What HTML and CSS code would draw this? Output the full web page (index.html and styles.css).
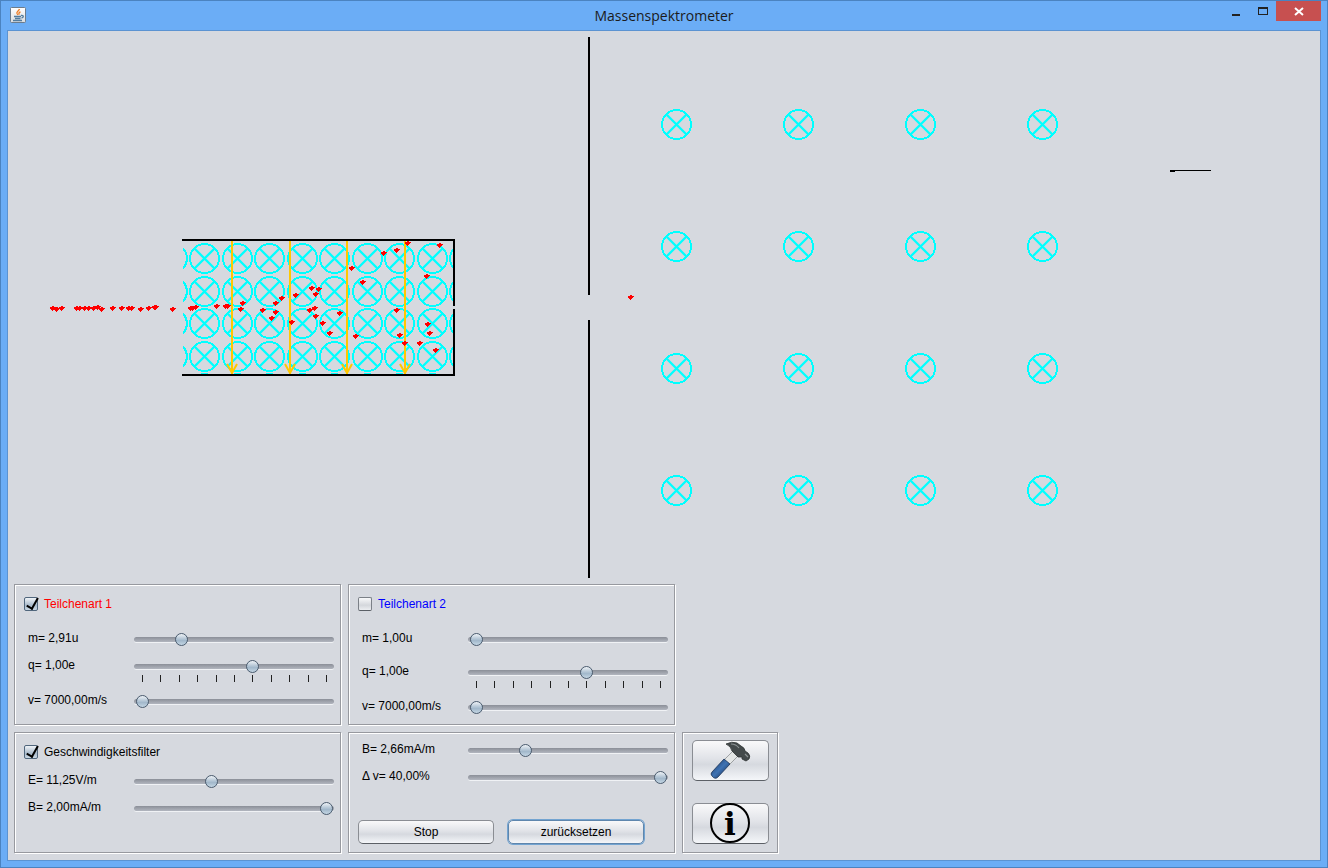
FILE: index.html
```
<!DOCTYPE html>
<html lang="de">
<head>
    <meta charset="UTF-8">
    <meta name="viewport" content="width=device-width, initial-scale=1.0">
    <title>Massenspektrometer</title>
    <link rel="stylesheet" href="styles.css">
</head>
<body>

<div class="window">
    <header class="titlebar">
        <svg class="app-icon" width="16" height="16" viewBox="0 0 16 16">
            <defs>
                <linearGradient id="iconBg" x1="0" y1="0" x2="0" y2="1">
                    <stop offset="0" stop-color="#fff"/>
                    <stop offset="1" stop-color="#d9dcdf"/>
                </linearGradient>
            </defs>
            <rect x="0.5" y="0.5" width="15" height="15" rx="1" fill="url(#iconBg)" stroke="#6c7c8c"/>
            <path d="M9.5 2C9 4 6 4.500 7 6.500L8 8M10.500 5C8.500 5.500 8.500 6.500 9.500 7.500" fill="none" stroke="#ee7d24" stroke-width="1.300"/>
            <path d="M4 9.500H11M5 11.500H10.500M3 13.500H12M11 8.500C14 8 14 10.500 11.500 11" fill="none" stroke="#537c9e" stroke-width="1.300"/>
        </svg>
        <h1>Massenspektrometer</h1>
        <div class="window-buttons">
            <button type="button" aria-label="Minimieren"><svg width="27" height="20"><rect x="10" y="13" width="8" height="2" fill="#222"/></svg></button>
            <button type="button" aria-label="Maximieren"><svg width="27" height="20"><path d="M9 6H19V14H9ZM10 8V13H18V8Z" fill="#222" fill-rule="evenodd"/></svg></button>
            <button type="button" class="close" aria-label="Schließen"><svg width="45" height="20"><path d="M19 7L27 14M27 7L19 14" stroke="#fff" stroke-width="2"/></svg></button>
        </div>
    </header>

    <main class="client">
        <svg class="simulation" id="simulation">
            <defs>
                <clipPath id="filterClip"><rect x="183" y="241" width="270" height="133"/></clipPath>
                <g id="fieldIn" class="field">
                    <circle r="14.500"/>
                    <path d="M-10 -10L10 10M-10 10L10 -10"/>
                </g>
                <g id="particle" class="particle">
                    <path d="M-1 -2H1V-1H3V0H2V1H1V2H0V3H-1V2H-2V1H-3V-1H-1Z"/>
                </g>
            </defs>
            <g transform="translate(-8,-31)">
                <g id="spectrometerField"></g>
                <g id="filterField" clip-path="url(#filterClip)"></g>
                <g id="electricField" class="electric"></g>
                <path class="wall" d="M182 240H454V306M454 309V375H182"/>
                <path class="wall" d="M589 37V295M589 320V578"/>
                <path class="detector" d="M1170 170H1211V171H1175V172H1170Z"/>
                <g id="particles"></g>
            </g>
        </svg>

        <div class="controls">
            <section class="panel">
                <label class="check red"><input type="checkbox" checked> Teilchenart 1</label>
                <div class="row">
                    <label for="m1">m= 2,91u</label>
                    <div class="slider"><input type="range" id="m1" min="1" max="10" step="0.01" value="2.91"></div>
                </div>
                <div class="row">
                    <label for="q1">q= 1,00e</label>
                    <div class="slider"><input type="range" id="q1" min="-5" max="5" value="1"></div>
                    <div class="ticks"><i></i><i></i><i></i><i></i><i></i><i></i><i></i><i></i><i></i><i></i><i></i></div>
                </div>
                <div class="row">
                    <label for="v1">v= 7000,00m/s</label>
                    <div class="slider"><input type="range" id="v1" min="7000" max="20000" value="7000"></div>
                </div>
            </section>

            <section class="panel">
                <label class="check blue"><input type="checkbox"> Teilchenart 2</label>
                <div class="row spaced">
                    <label for="m2">m= 1,00u</label>
                    <div class="slider"><input type="range" id="m2" min="1" max="10" step="0.01" value="1"></div>
                </div>
                <div class="row">
                    <label for="q2">q= 1,00e</label>
                    <div class="slider"><input type="range" id="q2" min="-5" max="5" value="1"></div>
                    <div class="ticks"><i></i><i></i><i></i><i></i><i></i><i></i><i></i><i></i><i></i><i></i><i></i></div>
                </div>
                <div class="row">
                    <label for="v2">v= 7000,00m/s</label>
                    <div class="slider"><input type="range" id="v2" min="7000" max="20000" value="7000"></div>
                </div>
            </section>

            <section class="panel filter">
                <label class="check"><input type="checkbox" checked> Geschwindigkeitsfilter</label>
                <div class="row">
                    <label for="e">E= 11,25V/m</label>
                    <div class="slider"><input type="range" id="e" min="0" max="30" step="0.01" value="11.25"></div>
                </div>
                <div class="row">
                    <label for="bf">B= 2,00mA/m</label>
                    <div class="slider"><input type="range" id="bf" min="0" max="2" step="0.01" value="2"></div>
                </div>
            </section>

            <section class="panel main-field">
                <div class="row">
                    <label for="b">B= 2,66mA/m</label>
                    <div class="slider"><input type="range" id="b" min="0" max="10" step="0.01" value="2.66"></div>
                </div>
                <div class="row">
                    <label for="dv">Δ v= 40,00%</label>
                    <div class="slider"><input type="range" id="dv" min="0" max="40" value="40"></div>
                </div>
                <div class="actions">
                    <button type="button" class="btn">Stop</button>
                    <button type="button" class="btn focused">zurücksetzen</button>
                </div>
            </section>

            <section class="panel tools">
                <button type="button" class="btn" aria-label="Einstellungen">
                    <svg width="40" height="38" viewBox="0 0 40 38">
                        <defs>
                            <linearGradient id="handle" x1="0" y1="0" x2="1" y2="1">
                                <stop offset="0.2" stop-color="#234a80"/>
                                <stop offset="0.5" stop-color="#3f73b3"/>
                                <stop offset="0.8" stop-color="#1d3f70"/>
                            </linearGradient>
                        </defs>
                        <path d="M22 9L27 14L18 23L13 18Z" fill="#e4e6e6" stroke="#8b8f90" stroke-width="0.800"/>
                        <path d="M13 17L19 22L7 35Q4 38 1 34Q-1 32 1 30Z" fill="url(#handle)" stroke="#1d3557" stroke-width="0.800"/>
                        <path d="M15 2Q21 -1 26 1L30 4Q34 6 34 9L37 11Q40 14 38 17L35 19L31 17V15L27 15L21 9Q20 4 15 2Z" fill="#444a4b" stroke="#2f3334" stroke-width="0.800"/>
                        <path d="M20 2Q25 2 28 6M34 12L37 15" fill="none" stroke="#8c9293" stroke-width="1.200"/>
                    </svg>
                </button>
                <button type="button" class="btn" aria-label="Info">
                    <svg width="40" height="40" viewBox="0 0 40 40">
                        <circle cx="19" cy="19" r="19" fill="none" stroke="#000" stroke-width="2"/>
                        <text class="info-letter" x="19" y="31" text-anchor="middle">i</text>
                    </svg>
                </button>
            </section>
        </div>
    </main>
</div>

<script>
    function add(parent, symbol, x, y) {
        const el = document.createElementNS("http://www.w3.org/2000/svg", "use");
        el.setAttribute("href", symbol);
        el.setAttribute("x", x);
        el.setAttribute("y", y);
        document.getElementById(parent).appendChild(el);
    }

    // Magnetfeld im Spektrometer
    for (let i = 0; i < 4; i++) {
        for (let j = 0; j < 4; j++) {
            add("spectrometerField", "#fieldIn", 676.5 + i * 122, 124.5 + j * 122);
        }
    }

    // Magnetfeld im Geschwindigkeitsfilter
    for (let i = 0; i < 10; i++) {
        for (let j = 0; j < 6; j++) {
            add("filterField", "#fieldIn", Math.floor(172 + i * 32.5) + 0.5, Math.floor(225.9 + j * 32.6) + 0.5);
        }
    }

    // E-Feld
    for (const x of [232, 290, 347, 405]) {
        const arrow = document.createElementNS("http://www.w3.org/2000/svg", "path");
        arrow.setAttribute("d", `M${x} 241V374M${x - 5} 364L${x} 373L${x + 5} 364`);
        document.getElementById("electricField").appendChild(arrow);
    }

    const particles = [
        [53, 308], [57, 309], [62, 308], [77, 308], [80, 308], [85, 308], [89, 308], [94, 308], [98, 307],
        [102, 309], [113, 308], [122, 308], [129, 308], [132, 308], [141, 309], [149, 308], [155, 307],
        [156, 307], [173, 309], [191, 308], [193, 308], [196, 307], [217, 306], [226, 306], [228, 306],
        [243, 303], [241, 309], [263, 310], [276, 303], [282, 298], [276, 312], [272, 318], [292, 322],
        [296, 295], [312, 288], [316, 294], [319, 289], [310, 310], [315, 308], [316, 316], [323, 323],
        [330, 333], [340, 313], [352, 268], [363, 282], [356, 336], [384, 253], [397, 250], [408, 243],
        [440, 245], [427, 276], [397, 310], [400, 335], [405, 343], [420, 343], [428, 324], [430, 333],
        [436, 350], [631, 297]
    ];
    particles.forEach(([x, y]) => add("particles", "#particle", x, y));
</script>

</body>
</html>
```

FILE: styles.css
```
* { box-sizing: border-box; }
body { margin: 0; font-family: "Liberation Sans", Arial, sans-serif; font-size: 12px; color: #000; }
button, input { margin: 0; padding: 0; font: inherit; }

.window { display: flex; flex-direction: column; min-height: 100vh; padding: 0 6px 6px; background-color: #6badf6; border: 1px solid #4b83c0; }
.titlebar { display: grid; grid-template-columns: 1fr auto 1fr; height: 29px; }
.titlebar h1 { margin: 0; font-family: "Open Sans", "Noto Sans", sans-serif; font-size: 14px; font-weight: normal; line-height: 29px; color: #1b1b1b; }
.app-icon { margin: 6px 0 0 3px; }
.window-buttons { display: flex; justify-content: flex-end; align-items: flex-start; }
.window-buttons button { height: 20px; border: 0; background: none; }
.window-buttons svg { display: block; }
.window-buttons .close { background-color: #c75050; }

.client { flex: 1; display: flex; flex-direction: column; background-color: #d6d9df; border: 1px solid #5b93d2; }
.simulation { display: block; flex: 1; width: 100%; min-height: 547px; shape-rendering: crispEdges; }
.field { fill: none; stroke: #00ffff; stroke-width: 2; }
.field path { stroke-width: 2.3; shape-rendering: auto; }
.electric { fill: none; stroke: #ffc800; stroke-width: 2; shape-rendering: auto; }
.wall { fill: none; stroke: #000; stroke-width: 2; }
.particle { fill: #ff0000; }

.controls { display: grid; grid-template-columns: 327px 327px 96px; gap: 7px; padding: 6px 6px 7px; }
.panel { border: 1px solid #97999f; box-shadow: 1px 1px 0 #fff, inset 1px 1px 0 #fff; padding: 12px 6px 3px 9px; min-height: 121px; }
.filter { grid-column: 1; }
.check { display: flex; align-items: center; gap: 6px; height: 14px; margin-bottom: 15px; }
.filter .check { margin-bottom: 9px; }
.red { color: #ff0000; }
.blue { color: #0000ff; }
.check input { appearance: none; width: 14px; height: 14px; border: 1px solid #7b8087; border-bottom-color: #5a5f66; border-radius: 2px; background: linear-gradient(#f8f9fa, #d4d7dc 60%, #eceef1); }
.check input:checked { display: grid; border-color: #50667c; background: linear-gradient(#f0f4f8, #a9bacb 60%, #c8d7e4); }
.check input:checked::after { content: ""; width: 5px; height: 11px; margin: -2px 0 0 4px; border: solid #000; border-width: 0 2px 2px 0; transform: rotate(30deg); }

.row { display: grid; grid-template-columns: 106px 200px; padding-left: 4px; }
.row label { height: 27px; line-height: 24px; }
.spaced { margin-bottom: 6px; }
.slider { display: grid; align-items: center; height: 27px; }
.slider::before { content: ""; grid-area: 1 / 1; height: 5px; border-radius: 3px; background: linear-gradient(#8b8f98, #b2b6bf); box-shadow: 0 1px 0 #f0f2f5; }
.slider input { appearance: none; grid-area: 1 / 1; width: 197px; height: 14px; margin-left: 2px; background: none; z-index: 1; }
.slider input::-webkit-slider-thumb { appearance: none; width: 13px; height: 13px; border: 1px solid #4a5b6e; border-radius: 50%; background: linear-gradient(#eef2f6, #b3c5d5 45%, #a2b8cb 60%, #c4d6e4); }
.ticks { grid-column: 2; display: flex; justify-content: space-between; height: 8px; padding: 0 7px 0 8px; }
.ticks i { width: 1px; height: 7px; margin-top: -5px; background-color: #222; }

.btn { height: 24px; border: 1px solid #8a8d93; border-bottom-color: #5c6066; border-radius: 5px; background: linear-gradient(#f9f9fa, #e1e3e8 45%, #d6d9df 60%, #f4f6f9); color: #000; }
.focused { box-shadow: 0 0 0 1px #73a4d1; border-color: #5f86ad; }
.main-field { padding-top: 4px; }
.actions { display: grid; grid-template-columns: 136px 136px; gap: 14px; margin-top: 29px; }
.tools { display: flex; flex-direction: column; gap: 22px; padding: 7px 8px 8px 9px; }
.tools .btn { display: flex; align-items: center; justify-content: center; height: 41px; }
.tools svg { overflow: visible; }
.info-letter { font-family: "DejaVu Serif", serif; font-size: 31px; font-weight: bold; }
```
